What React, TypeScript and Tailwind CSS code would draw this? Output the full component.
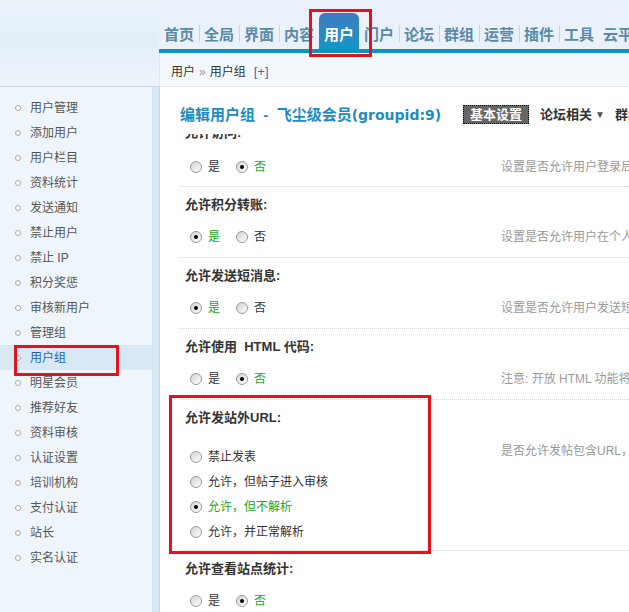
import React from "react";

const tabs = ["首页", "全局", "界面", "内容", "用户", "门户", "论坛", "群组", "运营", "插件", "工具", "云平台"];

const menu = [
  "用户管理", "添加用户", "用户栏目", "资料统计", "发送通知", "禁止用户", "禁止 IP", "积分奖惩", "审核新用户",
  "管理组", "用户组", "明星会员", "推荐好友", "资料审核", "认证设置", "培训机构", "支付认证", "站长", "实名认证",
];

function Radio({ checked }: { checked?: boolean }) {
  return (
    <span className="w-[12px] h-[12px] shrink-0 rounded-full border border-[#9a9c9d] bg-gradient-to-br from-[#d2d3d0] to-white flex items-center justify-center">
      {checked && <span className="w-[4px] h-[4px] rounded-full bg-black" />}
    </span>
  );
}

function Opt({ label, checked }: { label: string; checked?: boolean }) {
  return (
    <span className="flex items-center gap-[6px]">
      <Radio checked={checked} />
      <span className={checked ? "text-[#21a621]" : "text-[#333]"}>{label}</span>
    </span>
  );
}

function YesNo({ label, yes, desc, first }: { label: React.ReactNode; yes: boolean; desc?: string; first?: boolean }) {
  return (
    <div className={first ? "ml-[20px] border-b border-dotted border-[#d4d4d4] pb-[3px]" : "ml-[20px] border-b border-dotted border-[#d4d4d4] pb-[4px]"}>
      <div className={first ? "h-[37px] -mt-[20px] flex items-center pl-[5px] text-[13px] font-bold text-[#333]" : "h-[34px] flex items-center pl-[5px] text-[13px] font-bold text-[#333]"}>
        {label}
      </div>
      <div className="h-[32px] flex items-center">
        <div className="w-[321px] shrink-0 pl-[10px] flex items-center gap-[16px]">
          <Opt label="是" checked={yes} />
          <Opt label="否" checked={!yes} />
        </div>
        <span className="whitespace-nowrap text-[#999]">{desc}</span>
      </div>
    </div>
  );
}

export default function App() {
  return (
    <div className="relative w-[629px] h-[612px] overflow-hidden bg-[#e9f2fa] text-[12px] leading-none text-[#333] font-['Liberation_Sans','Noto_Sans_CJK_SC',sans-serif]">
      <div className="flex h-full">
        {/* left column */}
        <div className="w-[159px] shrink-0 flex flex-col">
          <div className="h-[87px] shrink-0 border-b border-[#c3d5e4] bg-gradient-to-b from-[#ebf3fb] via-[#e3eef8] to-[#edf4fb]" />
          <ul className="flex-1 bg-[#eef5fb] border-r-[7px] border-[#d9e8f5] pt-[8px]">
            {menu.map((m) => {
              const active = m === "用户组";
              return (
                <li key={m} className={active ? "h-[25px] flex items-center bg-[#d9e8f5]" : "h-[25px] flex items-center"}>
                  <span className="ml-[15px] w-[6px] h-[6px] rounded-full border border-[#a8a8a8] bg-white" />
                  <span className={active ? "ml-[9px] whitespace-pre text-[#2464a8]" : "ml-[9px] whitespace-pre text-[#555]"}>{m}</span>
                </li>
              );
            })}
          </ul>
        </div>

        {/* right column */}
        <div className="flex-1 flex flex-col min-w-0">
          <nav className="h-[53px] shrink-0 flex items-end border-b-4 border-[#0c93c5]">
            {tabs.map((t, i) => {
              const active = t === "用户";
              const sep = i > 0 && !active && tabs[i - 1] !== "用户";
              return (
                <div
                  key={t}
                  className={
                    active
                      ? "w-[40px] h-[36px] shrink-0 flex items-center rounded-t-[6px] bg-gradient-to-b from-[#3b7cbf] to-[#0c96c9] text-white"
                      : "w-[40px] h-[36px] shrink-0 flex items-center text-[#5b89a6]"
                  }
                >
                  <span className={sep ? "w-px h-[17px] mt-[4px] bg-[#c6d7e3]" : "w-px h-[17px]"} />
                  <span className="pl-[4px] pt-[4px] text-[15px] font-bold whitespace-nowrap font-['Noto_Sans_CJK_SC',sans-serif]">{t}</span>
                </div>
              );
            })}
          </nav>

          <div className="h-[34px] shrink-0 flex items-center pl-[11px] pt-[4px] bg-[#f3f8fc] border-l border-[#dbe7f1] border-b border-b-[#dfe9f1]">
            <span>用户</span>
            <span className="mx-[4px] text-[#999]">»</span>
            <span>用户组</span>
            <span className="ml-[8px] text-[13px] text-[#3a6eab]">[+]</span>
          </div>

          <div className="flex-1 bg-white border-l border-[#c3d5e4] flex flex-col">
            <div className="h-[47px] shrink-0 flex items-center pl-[20px] pt-[8px] whitespace-nowrap">
              <span className="w-[283px] shrink-0 text-[15px] font-bold text-[#1f8bbd]">
                编辑用户组 &nbsp;-&nbsp; 飞尘级会员
                <span className="font-['DejaVu_Sans',sans-serif] text-[14px]">(groupid:9)</span>
              </span>
              <span className="h-[19px] px-[6px] flex items-center bg-[#666] border border-dotted border-[#111] text-white text-[13px] font-bold">
                基本设置
              </span>
              <span className="ml-[11px] flex items-center text-[13px] font-bold text-[#333]">
                论坛相关<span className="ml-[3px] text-[10px] text-[#555]">▼</span>
              </span>
              <span className="ml-[10px] text-[13px] font-bold text-[#333]">群组</span>
            </div>

            <div className="flex-1 overflow-hidden">
              <YesNo first label="允许访问:" yes={false} desc="设置是否允许用户登录后访问站点" />
              <YesNo label="允许积分转账:" yes desc="设置是否允许用户在个人中心转账积分" />
              <YesNo label="允许发送短消息:" yes desc="设置是否允许用户发送短消息" />
              <YesNo
                label={<>允许使用&nbsp; HTML 代码:</>}
                yes={false}
                desc="注意: 开放 HTML 功能将产生安全隐患"
              />

              <div className="ml-[20px] border-b border-dotted border-[#d4d4d4] pb-[6px]">
                <div className="h-[34px] flex items-center pl-[5px] text-[13px] font-bold text-[#333]">允许发站外URL:</div>
                <div className="mt-[10px] flex">
                  <div className="w-[321px] shrink-0 pl-[10px] flex flex-col">
                    <div className="h-[25px] flex items-center"><Opt label="禁止发表" /></div>
                    <div className="h-[25px] flex items-center"><Opt label="允许，但帖子进入审核" /></div>
                    <div className="h-[25px] flex items-center"><Opt label="允许，但不解析" checked /></div>
                    <div className="h-[25px] flex items-center"><Opt label="允许，并正常解析" /></div>
                  </div>
                  <span className="h-[14px] flex items-center whitespace-nowrap text-[#999]">是否允许发帖包含URL，用户发帖时含有站外URL将如何处理</span>
                </div>
              </div>

              <YesNo label="允许查看站点统计:" yes={false} />
            </div>
          </div>
        </div>
      </div>

      {/* red annotation boxes */}
      <div className="absolute left-[309px] top-[9px] w-[63px] h-[48px] border-[3px] border-[#e2131b]" />
      <div className="absolute left-[14px] top-[345px] w-[105px] h-[31px] border-[3px] border-[#e2131b]" />
      <div className="absolute left-[169px] top-[395px] w-[262px] h-[159px] border-[3px] border-[#e2131b]" />
    </div>
  );
}
